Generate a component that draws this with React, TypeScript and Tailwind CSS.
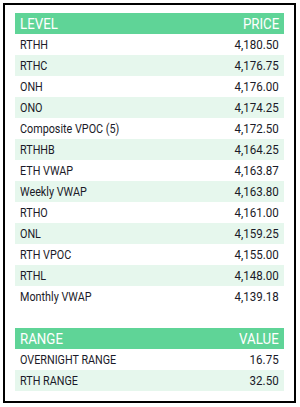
import React from "react";

const levels: [string, string][] = [
  ["RTHH", "4,180.50"],
  ["RTHC", "4,176.75"],
  ["ONH", "4,176.00"],
  ["ONO", "4,174.25"],
  ["Composite VPOC (5)", "4,172.50"],
  ["RTHHB", "4,164.25"],
  ["ETH VWAP", "4,163.87"],
  ["Weekly VWAP", "4,163.80"],
  ["RTHO", "4,161.00"],
  ["ONL", "4,159.25"],
  ["RTH VPOC", "4,155.00"],
  ["RTHL", "4,148.00"],
  ["Monthly VWAP", "4,139.18"],
];

const ranges: [string, string][] = [
  ["OVERNIGHT RANGE", "16.75"],
  ["RTH RANGE", "32.50"],
];

function Table({ head, rows }: { head: [string, string]; rows: [string, string][] }) {
  return (
    <div className="flex flex-col">
      <div className="flex h-[21px] items-center justify-between bg-[#5fd497] px-[5px] text-[14px] text-white">
        <span className="inline-block origin-left scale-x-[0.95]">{head[0]}</span>
        <span className="inline-block origin-right scale-x-[0.95]">{head[1]}</span>
      </div>
      {rows.map(([a, b], i) => (
        <div
          key={a}
          className={
            "flex h-[21px] items-center justify-between px-[5px] text-[#1a1a28] " +
            (i % 2 === 1 ? "bg-[#e6f7ed]" : "bg-white")
          }
        >
          <span className="inline-block origin-left scale-x-[0.83] whitespace-nowrap">{a}</span>
          <span className="inline-block origin-right scale-x-[0.89] whitespace-nowrap">{b}</span>
        </div>
      ))}
    </div>
  );
}

export default function App() {
  return (
    <div className="h-[407px] w-[300px] bg-white p-[3px]">
      <div
        className="flex h-[400px] w-[293px] flex-col gap-[21px] border-2 border-black px-[10px] pt-[8px] text-[13px] leading-none"
        style={{ fontFamily: 'Roboto, sans-serif' }}
      >
        <Table head={["LEVEL", "PRICE"]} rows={levels} />
        <Table head={["RANGE", "VALUE"]} rows={ranges} />
      </div>
    </div>
  );
}
